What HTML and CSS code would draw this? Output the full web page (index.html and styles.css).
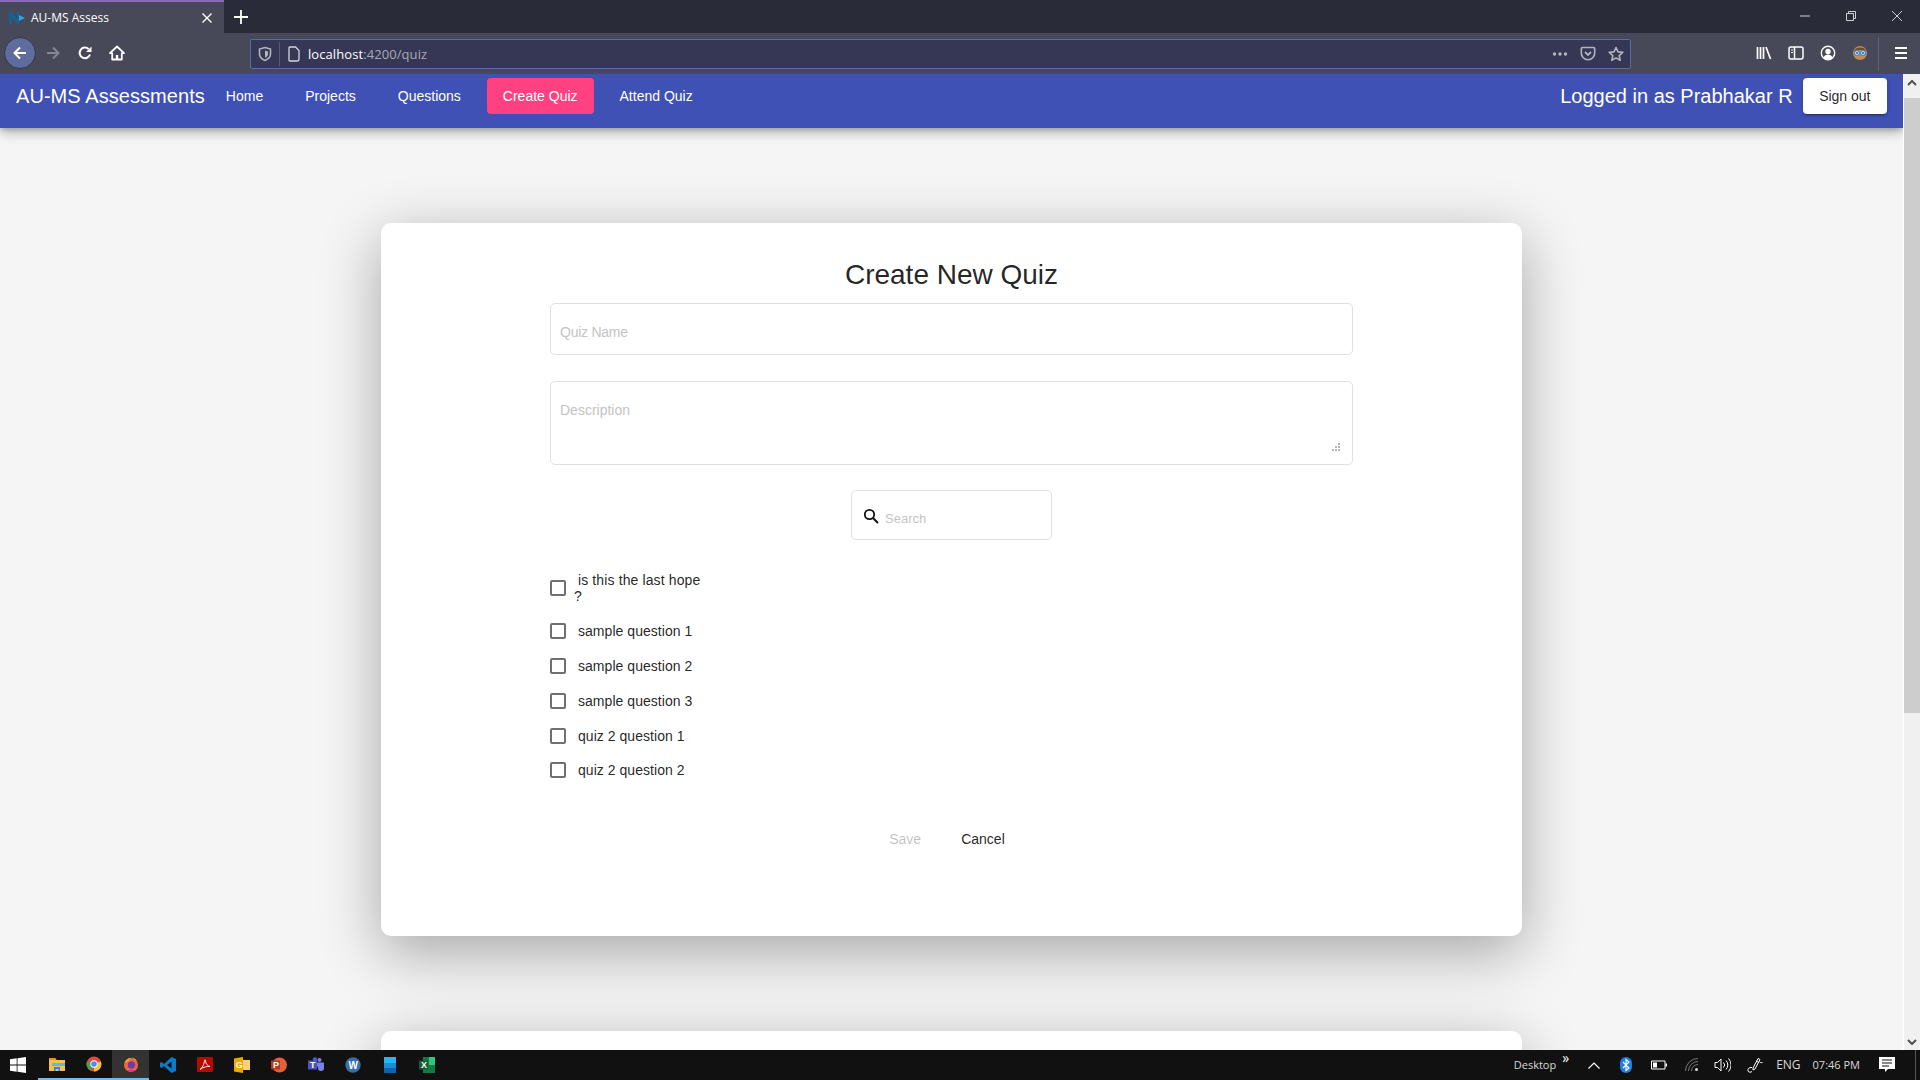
FILE: index.html
```html
<!DOCTYPE html>
<html lang="en">
<head>
    <meta charset="UTF-8">
    <title>AU-MS Assess</title>
    <link rel="stylesheet" href="styles.css">
</head>
<body>
<div class="window">

    <div class="tabbar">
        <div class="tab">
            <svg class="favicon" viewBox="0 0 16 16" width="16" height="16"><path d="M0 14V2h3.500L8 9V2h2.500v12H7.500L3 7v7z" fill="#1a5f92"/><path d="M10 5l6 3-6 3z" fill="#2fa3dc"/></svg>
            <span class="tab-title">AU-MS Assess</span>
            <svg class="tab-close" viewBox="0 0 12 12" width="12" height="12"><path d="M1.5 1.5l9 9M10.5 1.5l-9 9" stroke="#fff" stroke-width="1.4"/></svg>
        </div>
        <div class="newtab">
            <svg viewBox="0 0 14 14" width="14" height="14"><path d="M7 0v14M0 7h14" stroke="#fff" stroke-width="1.8"/></svg>
        </div>
        <div class="winctl">
            <div class="winbtn"><svg viewBox="0 0 12 12" width="12" height="12"><path d="M1 6h10" stroke="#cfd0d6" stroke-width="1"/></svg></div>
            <div class="winbtn"><svg viewBox="0 0 12 12" width="12" height="12"><path d="M1.5 3.5h7v7h-7zM3.5 3.5v-2h7v7h-2" fill="none" stroke="#cfd0d6" stroke-width="1"/></svg></div>
            <div class="winbtn"><svg viewBox="0 0 12 12" width="12" height="12"><path d="M1 1l10 10M11 1L1 11" stroke="#cfd0d6" stroke-width="1"/></svg></div>
        </div>
    </div>

    <div class="toolbar">
        <div class="backbtn">
            <svg viewBox="0 0 16 16" width="16" height="16"><path d="M14 8H3M8 2.5L2.5 8 8 13.5" fill="none" stroke="#fff" stroke-width="2"/></svg>
        </div>
        <div class="toolbtn">
            <svg viewBox="0 0 16 16" width="16" height="16"><path d="M2 8h11M8 2.5L13.5 8 8 13.5" fill="none" stroke="#85868f" stroke-width="2"/></svg>
        </div>
        <div class="toolbtn">
            <svg viewBox="0 0 16 16" width="16" height="16"><path d="M13 9.5A5.3 5.3 0 1 1 11.6 4" fill="none" stroke="#fff" stroke-width="2"/><path d="M14.5 1.5v5.5H9z" fill="#fff"/></svg>
        </div>
        <div class="toolbtn">
            <svg viewBox="0 0 16 16" width="16" height="16"><path d="M8 1.5L1 8.2h2.2V14.5h9.6V8.2H15z" fill="none" stroke="#fff" stroke-width="1.8" stroke-linejoin="round"/><path d="M6.8 10h2.4v4.5H6.8z" fill="#fff"/></svg>
        </div>

        <div class="urlbar">
            <svg class="url-shield" viewBox="0 0 14 16" width="14" height="16"><path d="M7 1.5l5.5 1.6v5c0 3-2.4 5.2-5.5 6.4-3.1-1.2-5.5-3.4-5.5-6.4v-5z" fill="none" stroke="#b3b4bd" stroke-width="1.6"/><path d="M7 4.5l3 .9v2.8c0 1.6-1.3 2.8-3 3.6z" fill="#b3b4bd"/></svg>
            <span class="url-sep"></span>
            <svg class="url-doc" viewBox="0 0 14 16" width="14" height="16"><path d="M2.5 1h6l3.5 3.5V13a2 2 0 0 1-2 2h-7a1 1 0 0 1-1-1V2a1 1 0 0 1 .5-1z" fill="none" stroke="#d5d6dc" stroke-width="1.3"/></svg>
            <span class="url-text">localhost<span class="url-dim">:4200/quiz</span></span>
            <div class="url-actions">
                <svg viewBox="0 0 16 16" width="16" height="16"><circle cx="2.5" cy="8" r="1.7" fill="#b3b4bd"/><circle cx="8" cy="8" r="1.7" fill="#b3b4bd"/><circle cx="13.5" cy="8" r="1.7" fill="#b3b4bd"/></svg>
                <svg viewBox="0 0 16 16" width="16" height="16"><path d="M2.5 1.5h11A1.2 1.2 0 0 1 14.700 2.700V7A6.700 6.700 0 0 1 1.300 7V2.700A1.200 1.200 0 0 1 2.500 1.500z" fill="none" stroke="#b3b4bd" stroke-width="1.6"/><path d="M5 6l3 3 3-3" fill="none" stroke="#b3b4bd" stroke-width="1.8"/></svg>
                <svg viewBox="0 0 16 16" width="16" height="16"><path d="M8 1.5l2 4.4 4.8.5-3.6 3.2 1 4.7L8 11.900l-4.200 2.400 1-4.700L1.200 6.400 6 5.900z" fill="none" stroke="#b3b4bd" stroke-width="1.6" stroke-linejoin="round"/></svg>
            </div>
        </div>

        <div class="toolbtn toolbtn-first">
            <svg viewBox="0 0 16 16" width="16" height="16"><path d="M1.500 2v12M4.500 2v12M7.500 2v12M10 2l4.500 12" stroke="#fff" stroke-width="1.700" fill="none"/></svg>
        </div>
        <div class="toolbtn">
            <svg viewBox="0 0 16 16" width="16" height="16"><rect x="1" y="2" width="14" height="12" rx="2" fill="none" stroke="#fff" stroke-width="1.500"/><path d="M6.500 2v12" stroke="#fff" stroke-width="1.500"/><path d="M3 5h2M3 7.500h2" stroke="#fff" stroke-width="1"/></svg>
        </div>
        <div class="toolbtn">
            <svg viewBox="0 0 16 16" width="16" height="16"><circle cx="8" cy="8" r="6.700" fill="none" stroke="#fff" stroke-width="1.400"/><circle cx="8" cy="6.500" r="2.700" fill="#fff"/><path d="M3.500 12.500c1-2.300 2.600-3 4.500-3s3.500.7 4.500 3A6 6 0 0 1 3.500 12.500z" fill="#fff"/></svg>
        </div>
        <div class="toolbtn">
            <svg viewBox="0 0 16 16" width="16" height="16"><circle cx="8" cy="8" r="7" fill="#c98a4b"/><path d="M2 6c1-4 11-5 12 0-3-1.500-9-1.500-12 0z" fill="#7a4a22"/><circle cx="5" cy="8" r="2.400" fill="#fff" stroke="#2e8ee6" stroke-width="1.200"/><circle cx="11" cy="8" r="2.400" fill="#fff" stroke="#2e8ee6" stroke-width="1.200"/><circle cx="5" cy="8" r=".9" fill="#333"/><circle cx="11" cy="8" r=".9" fill="#333"/></svg>
        </div>
        <span class="tool-sep"></span>
        <div class="toolbtn">
            <svg viewBox="0 0 16 16" width="16" height="16"><path d="M2 3h12M2 8h12M2 13h12" stroke="#fff" stroke-width="2"/></svg>
        </div>
    </div>

    <div class="viewport">
        <div class="page">
            <nav class="navbar">
                <span class="brand">AU-MS Assessments</span>
                <a class="nav-link">Home</a>
                <a class="nav-link">Projects</a>
                <a class="nav-link">Questions</a>
                <a class="nav-link active">Create Quiz</a>
                <a class="nav-link">Attend Quiz</a>
                <span class="user">Logged in as Prabhakar R</span>
                <a class="signout">Sign out</a>
            </nav>

            <main class="content">
                <section class="card">
                    <h1>Create New Quiz</h1>
                    <input class="field field-name" type="text" placeholder="Quiz Name">
                    <div class="field field-desc">
                        <textarea placeholder="Description"></textarea>
                        <svg class="grip" viewBox="0 0 8 8" width="8" height="8"><path d="M6 0h2v2H6zM3 3h2v2H3zM6 3h2v2H6zM0 6h2v2H0zM3 6h2v2H3zM6 6h2v2H6z" fill="#b5b5b5"/></svg>
                    </div>
                    <div class="search">
                        <svg viewBox="0 0 16 16" width="16" height="16"><circle cx="6.500" cy="6.500" r="4.700" fill="none" stroke="#111" stroke-width="1.800"/><path d="M10 10l5 5" stroke="#111" stroke-width="2"/></svg>
                        <input type="text" placeholder="Search">
                    </div>
                    <ul class="questions">
                        <li class="question"><span class="box"></span><span class="qtext qtext-long">is this the last hope<br>?</span></li>
                        <li class="question"><span class="box"></span><span class="qtext">sample question 1</span></li>
                        <li class="question"><span class="box"></span><span class="qtext">sample question 2</span></li>
                        <li class="question"><span class="box"></span><span class="qtext">sample question 3</span></li>
                        <li class="question"><span class="box"></span><span class="qtext">quiz 2 question 1</span></li>
                        <li class="question"><span class="box"></span><span class="qtext">quiz 2 question 2</span></li>
                    </ul>
                    <div class="actions">
                        <button class="btn" disabled>Save</button>
                        <button class="btn">Cancel</button>
                    </div>
                </section>
                <section class="card card-next"></section>
            </main>
        </div>

        <div class="scrollbar">
            <div class="scroll-arrow">
                <svg viewBox="0 0 10 6" width="10" height="6"><path d="M1 5l4-4 4 4" fill="none" stroke="#505050" stroke-width="2"/></svg>
            </div>
            <div class="scroll-thumb"></div>
            <div class="scroll-rest"></div>
            <div class="scroll-arrow">
                <svg viewBox="0 0 10 6" width="10" height="6"><path d="M1 1l4 4 4-4" fill="none" stroke="#505050" stroke-width="2"/></svg>
            </div>
        </div>
    </div>

    <footer class="taskbar">
        <div class="task start">
            <svg viewBox="0 0 16 16" width="16" height="16"><path d="M0 2.300l6.700-1V7.600H0zM7.500 1.200L16 0v7.600H7.500zM0 8.400h6.700v6.300l-6.700-1zM7.500 8.400H16V16l-8.500-1.200z" fill="#fff"/></svg>
        </div>
        <div class="task open">
            <svg viewBox="0 0 16 16" width="16" height="16"><path d="M0 2h6l1.500 2H16v11H0z" fill="#f4c24f"/><path d="M0 4h7.500L6 2H0z" fill="#d99e2b"/><path d="M3 7h13v3H3z" fill="#5cb6ef"/><path d="M5 15v-4h6v4H9.500v-2h-3v2z" fill="#2b88d8"/></svg>
        </div>
        <div class="task open">
            <svg viewBox="0 0 16 16" width="16" height="16"><circle cx="8" cy="8" r="7.500" fill="#dd4b3e"/><path d="M8 8l6.900-2.500A7.500 7.500 0 0 1 8 15.500z" fill="#f7c52f"/><path d="M8 8L4.200 14.500A7.500 7.500 0 0 1 1 5.500z" fill="#3aa757"/><circle cx="8" cy="8" r="3.700" fill="#fff"/><circle cx="8" cy="8" r="2.800" fill="#4a8bf5"/></svg>
        </div>
        <div class="task open current">
            <svg viewBox="0 0 16 16" width="16" height="16"><circle cx="8" cy="9" r="7" fill="#f2653a"/><path d="M9 1c3.500 1.500 6 4.500 6 8 0-3-1.500-4.500-3-5z" fill="#fcc02e"/><path d="M1.500 7C3 3 6 2 8 2 6.500 3.500 6 4.500 6 5z" fill="#f9a12b"/><circle cx="8.500" cy="9" r="3.700" fill="#6a3bb8"/><path d="M4 14a7 7 0 0 0 9 0z" fill="#e22f6d"/></svg>
        </div>
        <div class="task">
            <svg viewBox="0 0 16 16" width="16" height="16"><path d="M11.500 0L16 2v12l-4.500 2L4 9l-2.500 2L0 10V6l1.500-1L4 7zM11.500 4.500L7 8l4.500 3.500z" fill="#0a7bc8"/></svg>
        </div>
        <div class="task">
            <svg viewBox="0 0 16 16" width="16" height="16"><rect width="16" height="15" rx="1.500" fill="#b30b00"/><path d="M3 12.500c2-1 4.500-6 4.500-9 0-1 1-1 1 0 0 3 2 5.500 4.500 6-3-.3-6.500.5-10 3z" fill="none" stroke="#fff" stroke-width=".9"/></svg>
        </div>
        <div class="task">
            <svg viewBox="0 0 16 16" width="16" height="16"><path d="M0 1.500L9 0v16l-9-1.500z" fill="#f0a800"/><path d="M9 3h7v10H9z" fill="#f7d27a"/><text x="1.800" y="11" class="glyph">G</text></svg>
        </div>
        <div class="task">
            <svg viewBox="0 0 16 16" width="16" height="16"><circle cx="8.500" cy="8" r="7.500" fill="#e2613c"/><path d="M0 3.500h9v9H0z" fill="#b7391b"/><text x="2" y="11" class="glyph">P</text></svg>
        </div>
        <div class="task">
            <svg viewBox="0 0 16 16" width="16" height="16"><circle cx="11.500" cy="3" r="2" fill="#7b83eb"/><path d="M8 5.500h8V11a3 3 0 0 1-6 0z" fill="#7b83eb"/><circle cx="7" cy="2.500" r="2.300" fill="#5059c9"/><path d="M0 3.500h9v9H0z" fill="#4b53bc"/><text x="2" y="11" class="glyph">T</text></svg>
        </div>
        <div class="task">
            <svg viewBox="0 0 16 16" width="16" height="16"><circle cx="8" cy="8" r="7.700" fill="#3b6ea5"/><text x="3.400" y="12" class="glyph glyph-big">W</text></svg>
        </div>
        <div class="task">
            <svg viewBox="0 0 16 16" width="16" height="16"><path d="M2 0h12v6H2z" fill="#2fb4ef"/><path d="M2 6h12v5H2z" fill="#1690d8"/><path d="M2 11h12v5H2z" fill="#0f63ad"/></svg>
        </div>
        <div class="task">
            <svg viewBox="0 0 16 16" width="16" height="16"><path d="M4 0h12v16H4z" fill="#107c41"/><path d="M10 0h6v8h-6z" fill="#33c481"/><path d="M0 3.500h9v9H0z" fill="#185c37"/><text x="2" y="11" class="glyph">X</text></svg>
        </div>

        <div class="tray">
            <span class="tray-label">Desktop</span>
            <span class="tray-more">»</span>
            <svg class="tray-chevron" viewBox="0 0 12 7" width="12" height="7"><path d="M.5 6.500L6 1l5.500 5.500" fill="none" stroke="#fff" stroke-width="1.200"/></svg>
            <svg class="tray-bt" viewBox="0 0 12 16" width="12" height="16"><rect width="12" height="16" rx="6" fill="#1e7de6"/><path d="M3 5l6 6-3 2.500v-11L9 5l-6 6" fill="none" stroke="#fff" stroke-width="1.100"/></svg>
            <svg class="tray-battery" viewBox="0 0 16 10" width="16" height="10"><path d="M.5 1h13.500v8H.5z" fill="none" stroke="#fff"/><path d="M2 2.500h4v5H2z" fill="#fff"/><path d="M14.500 3.500H16v3h-1.500z" fill="#fff"/></svg>
            <svg class="tray-wifi" viewBox="0 0 14 14" width="14" height="14"><path d="M.5 13A12.500 12.500 0 0 1 13 .5M3.500 13A9.500 9.500 0 0 1 13 3.500M6.500 13A6.500 6.500 0 0 1 13 6.500" fill="none" stroke="#777" stroke-width="1"/><circle cx="11.500" cy="11.500" r="1.500" fill="#ddd"/></svg>
            <svg class="tray-volume" viewBox="0 0 17 14" width="17" height="14"><path d="M1 4.500h2.500L7 1v12L3.500 9.500H1z" fill="none" stroke="#fff"/><path d="M9.500 4.500a3.500 3.500 0 0 1 0 5M12 2.500a6.500 6.500 0 0 1 0 9M14.500.5a9.500 9.500 0 0 1 0 13" fill="none" stroke="#fff"/></svg>
            <svg class="tray-pen" viewBox="0 0 16 16" width="16" height="16"><path d="M6 11l5-9.500 2 1L8 12l-2 1z" fill="none" stroke="#fff"/><path d="M9 4l3 1.500M12.500 5c1 .5 2 1 3 .5M5 10.500C2 10 .5 12 1 14c.5 1.500 3 1.500 4 .5" fill="none" stroke="#fff"/></svg>
            <span class="tray-lang">ENG</span>
            <span class="tray-time">07:46 PM</span>
            <svg class="tray-notify" viewBox="0 0 16 16" width="16" height="16"><path d="M0 0h16v12H9l-3 3v-3H0z" fill="#fff"/><path d="M3 3h10M3 6h10M3 9h7" stroke="#111" stroke-width="1"/></svg>
            <span class="tray-edge"></span>
        </div>
    </footer>

</div>
</body>
</html>
```
FILE: styles.css
```css
* {
    box-sizing: border-box;
}

html, body {
    margin: 0;
    height: 100%;
    overflow: hidden;
}

body {
    font-family: "Liberation Sans", Arial, sans-serif;
    font-size: 14px;
    color: rgba(0, 0, 0, 0.87);
    background-color: #f5f5f5;
}

svg {
    display: block;
    flex-shrink: 0;
}

.window {
    display: flex;
    flex-direction: column;
    height: 1080px;
}

/* browser tabs */
.tabbar {
    display: flex;
    height: 33px;
    background-color: #2a2b38;
}

.tab {
    display: flex;
    align-items: center;
    width: 224px;
    padding-left: 9px;
    background-color: #474959;
    border-top: 2px solid #8a67c4;
    color: #fff;
}

.tab-title {
    margin-left: 6px;
    font-family: "Open Sans", sans-serif;
    font-size: 12px;
}

.tab-close {
    margin-left: auto;
    margin-right: 11px;
}

.newtab {
    display: flex;
    align-items: center;
    justify-content: center;
    width: 34px;
}

.winctl {
    display: flex;
    margin-left: auto;
}

.winbtn {
    display: flex;
    align-items: center;
    justify-content: center;
    width: 46px;
    height: 32px;
}

/* browser toolbar */
.toolbar {
    display: flex;
    align-items: center;
    height: 41px;
    padding-left: 4px;
    padding-right: 3px;
    background-color: #474959;
}

.backbtn {
    display: flex;
    align-items: center;
    justify-content: center;
    width: 32px;
    height: 32px;
    margin-right: 1px;
    margin-bottom: 2px;
    border-radius: 50%;
    background-color: #5f6d9e;
    border: 1px solid #33364a;
}

.toolbtn {
    display: flex;
    align-items: center;
    justify-content: center;
    width: 32px;
    height: 32px;
    margin-bottom: 2px;
}

.urlbar {
    display: flex;
    align-items: center;
    width: 1381px;
    height: 30px;
    margin-left: 117px;
    padding-left: 7px;
    background-color: #353755;
    border: 1px solid #5a6ba5;
    border-radius: 2px;
}

.url-sep {
    width: 1px;
    height: 24px;
    margin-left: 7px;
    background-color: #5a5c74;
}

.url-doc {
    margin-left: 7px;
}

.url-text {
    margin-left: 7px;
    font-family: "Open Sans", sans-serif;
    font-size: 13px;
    letter-spacing: 0.08px;
    color: #fff;
}

.url-dim {
    color: #a9aab4;
}

.url-actions {
    display: flex;
    gap: 12px;
    margin-left: auto;
    margin-right: 6px;
}

.toolbtn-first {
    margin-left: 117px;
}

.tool-sep {
    width: 1px;
    height: 34px;
    margin-left: 2px;
    margin-right: 6px;
    background-color: #5d6280;
}

/* page area */
.viewport {
    display: flex;
    height: 976px;
}

.page {
    flex: 1;
    overflow: hidden;
    background-color: #f5f5f5;
}

.navbar {
    position: relative;
    display: flex;
    align-items: center;
    gap: 10px;
    height: 54px;
    padding: 4px 16px 14px 16px;
    background-color: #3f51b5;
    color: #fff;
    box-shadow: 0 3px 5px -1px rgba(0, 0, 0, 0.2), 0 6px 10px 0 rgba(0, 0, 0, 0.14), 0 1px 18px 0 rgba(0, 0, 0, 0.12);
}

.brand {
    margin-right: -5px;
    font-size: 20px;
    letter-spacing: 0.06px;
}

.nav-link {
    padding: 0 16px;
    line-height: 36px;
    border-radius: 4px;
}

.nav-link.active {
    background-color: #ff4081;
}

.user {
    margin-left: auto;
    font-size: 20px;
}

.signout {
    padding: 0 16.500px;
    line-height: 36px;
    border-radius: 4px;
    background-color: #fff;
    color: rgba(0, 0, 0, 0.87);
    box-shadow: 0 3px 1px -2px rgba(0, 0, 0, 0.2), 0 2px 2px 0 rgba(0, 0, 0, 0.14), 0 1px 5px 0 rgba(0, 0, 0, 0.12);
}

.content {
    padding-top: 95px;
}

.card {
    display: flex;
    flex-direction: column;
    width: 1141px;
    height: 713px;
    margin: 0 auto 95px;
    padding: 35px 169px 0;
    background-color: #fff;
    border-radius: 10px;
    box-shadow: 0 16px 60px rgba(0, 0, 0, 0.33);
}

h1 {
    margin: 0 0 12px;
    font-size: 28px;
    font-weight: 400;
    line-height: 33px;
    text-align: center;
}

.field {
    width: 803px;
    border: 1px solid #e0e0e0;
    border-radius: 5px;
    background-color: #fff;
}

.field-name {
    height: 52px;
    padding: 6px 9px 0;
    margin-bottom: 26px;
    font: inherit;
    outline: none;
}

.field-name::placeholder {
    letter-spacing: -0.25px;
}

.field-desc {
    position: relative;
    height: 84px;
    padding: 20px 9px 11px;
    margin-bottom: 25px;
}

.field-desc textarea {
    display: block;
    width: 772px;
    height: 51px;
    padding: 0;
    border: none;
    outline: none;
    resize: none;
    font: inherit;
}

.grip {
    position: absolute;
    right: 12px;
    bottom: 13px;
}

::placeholder {
    color: #c4c4c4;
    opacity: 1;
}

.search {
    display: flex;
    align-items: center;
    align-self: center;
    width: 201px;
    height: 50px;
    padding: 2px 11px 0;
    border: 1px solid #e0e0e0;
    border-radius: 5px;
}

.search input {
    width: 150px;
    margin-left: 6px;
    margin-top: 4px;
    padding: 0;
    border: none;
    outline: none;
    font: inherit;
    font-size: 13px;
}

.questions {
    margin: 22px 0 0;
    padding: 0;
    list-style: none;
}

.question {
    display: flex;
    align-items: center;
    gap: 8px;
    padding: 9.500px 0;
    line-height: 16px;
}

.question:last-child {
    padding-top: 8.500px;
}

.box {
    width: 16px;
    height: 16px;
    border: 2px solid #707070;
    border-radius: 2px;
}

.qtext {
    text-indent: 4px;
    letter-spacing: 0.04px;
}

.qtext-long {
    letter-spacing: 0.12px;
}

.actions {
    display: flex;
    justify-content: center;
    gap: 8px;
    margin-top: 34px;
    padding-right: 9px;
}

.btn {
    height: 36px;
    padding: 0 16px;
    border: none;
    background: none;
    font: inherit;
    color: rgba(0, 0, 0, 0.87);
}

.btn:disabled {
    color: rgba(0, 0, 0, 0.26);
}

.card-next {
    margin-bottom: 0;
}

/* scrollbar */
.scrollbar {
    display: flex;
    flex-direction: column;
    width: 17px;
    background-color: #f0f0f0;
    border-left: 1px solid #fff;
}

.scroll-arrow {
    display: flex;
    align-items: center;
    justify-content: center;
    height: 17px;
    flex-shrink: 0;
}

.scroll-thumb {
    height: 615px;
    margin-top: 7px;
    background-color: #cdcdcd;
}

.scroll-rest {
    flex: 1;
}

/* windows taskbar */
.taskbar {
    display: flex;
    align-items: center;
    height: 30px;
    background-color: #111;
    color: #fff;
}

.task {
    display: flex;
    align-items: center;
    justify-content: center;
    width: 37px;
    height: 30px;
}

.start {
    width: 38px;
    justify-content: flex-start;
    padding-left: 10px;
}

.task.open {
    border-bottom: 2px solid #76b9ed;
}

.task.current {
    background-color: #333;
}

.glyph {
    font-family: "Liberation Sans", sans-serif;
    font-size: 9px;
    font-weight: 700;
    fill: #fff;
}

.glyph-big {
    font-size: 10px;
}

.tray {
    display: flex;
    align-items: center;
    margin-left: auto;
    height: 30px;
    font-family: "Open Sans", sans-serif;
    font-size: 11px;
    color: #d8d8d8;
}

.tray-label {
    margin-bottom: 2px;
}

.tray-more {
    align-self: flex-start;
    margin-left: 6px;
    font-size: 14px;
    line-height: 16px;
    color: #fff;
}

.tray-chevron {
    margin-left: 19px;
}

.tray-bt {
    margin-left: 20px;
}

.tray-battery {
    margin-left: 19px;
}

.tray-wifi {
    margin-left: 18px;
}

.tray-volume {
    margin-left: 15px;
}

.tray-pen {
    margin-left: 16px;
}

.tray-lang {
    margin-left: 13px;
    margin-bottom: 2px;
    font-size: 12px;
}

.tray-time {
    margin-left: 12px;
    margin-bottom: 2px;
}

.tray-notify {
    margin-left: 19px;
}

.tray-edge {
    width: 1px;
    height: 30px;
    margin-left: 20px;
    margin-right: 4px;
    background-color: #555;
}
```
